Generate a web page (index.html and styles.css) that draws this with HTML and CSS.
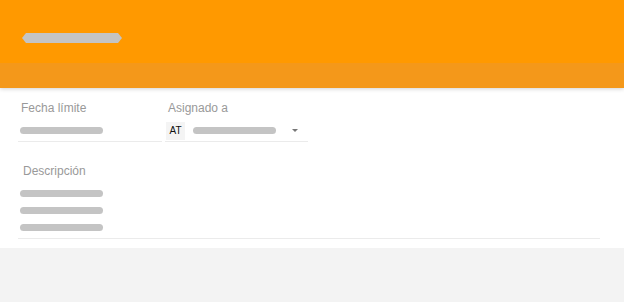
FILE: index.html
```html
<!DOCTYPE html>
<html lang="es">
<head>
    <meta charset="UTF-8">
    <meta name="viewport" content="width=device-width, initial-scale=1.0">
    <title>Tarea</title>
    <link rel="stylesheet" href="styles.css">
</head>
<body>

<header class="header">
    <div class="header-top">
        <span class="title-bar"></span>
    </div>
    <div class="header-band"></div>
</header>

<div class="panel">
    <div class="fields">
        <div class="field field-date">
            <label class="field-label">Fecha límite</label>
            <div class="field-value">
                <span class="bar"></span>
            </div>
        </div>
        <div class="field field-assignee">
            <label class="field-label">Asignado a</label>
            <div class="field-value">
                <span class="avatar">AT</span>
                <span class="bar"></span>
                <span class="arrow"></span>
            </div>
        </div>
    </div>

    <div class="description">
        <label class="field-label">Descripción</label>
        <div class="desc-lines">
            <span class="bar"></span>
            <span class="bar"></span>
            <span class="bar"></span>
        </div>
    </div>
</div>

</body>
</html>
```

FILE: styles.css
```css
body {
    font-family: "Liberation Sans", Arial, sans-serif;
    margin: 0;
    padding: 0;
    background-color: #f3f3f3;
}

.header {
    position: relative;
    z-index: 1;
    box-shadow: 0 1px 4px rgba(0, 0, 0, 0.18);
}

.header-top {
    height: 63px;
    background-color: #ff9900;
    display: flex;
    align-items: flex-start;
    padding-left: 22px;
}

.title-bar {
    display: block;
    width: 100px;
    height: 10px;
    margin-top: 33px;
    background-color: #c4c4c4;
    clip-path: polygon(4px 0, 96px 0, 100% 50%, 96px 100%, 4px 100%, 0 50%);
}

.header-band {
    height: 25px;
    background-color: #f4981a;
}

.panel {
    background-color: #fff;
    height: 160px;
    padding-left: 18px;
}

.fields {
    display: flex;
    gap: 3px;
    padding-top: 13px;
}

.field {
    width: 144px;
}

.field-assignee {
    width: 143px;
}

.field-label {
    display: block;
    font-size: 12px;
    line-height: 14px;
    color: #999;
    padding-left: 3px;
}

.field-value {
    display: flex;
    align-items: center;
    height: 21px;
    margin-top: 5px;
    border-bottom: 1px solid #ebebeb;
}

.bar {
    display: block;
    width: 83px;
    height: 7px;
    border-radius: 4px;
    background-color: #c4c4c4;
}

.field-date .bar {
    margin-left: 2px;
}

.avatar {
    width: 19px;
    height: 18px;
    margin-left: 1px;
    background-color: #f4f4f4;
    color: #111;
    font-size: 10px;
    line-height: 18px;
    text-align: center;
}

.field-assignee .bar {
    margin-left: 8px;
}

.arrow {
    width: 0;
    height: 0;
    margin-left: 16px;
    border-left: 3px solid transparent;
    border-right: 3px solid transparent;
    border-top: 3px solid #777;
}

.description {
    width: 582px;
    margin-top: 22px;
    border-bottom: 1px solid #ebebeb;
}

.description .field-label {
    padding-left: 5px;
}

.desc-lines {
    display: flex;
    flex-direction: column;
    gap: 10px;
    padding: 12px 0 7px 2px;
}
```
